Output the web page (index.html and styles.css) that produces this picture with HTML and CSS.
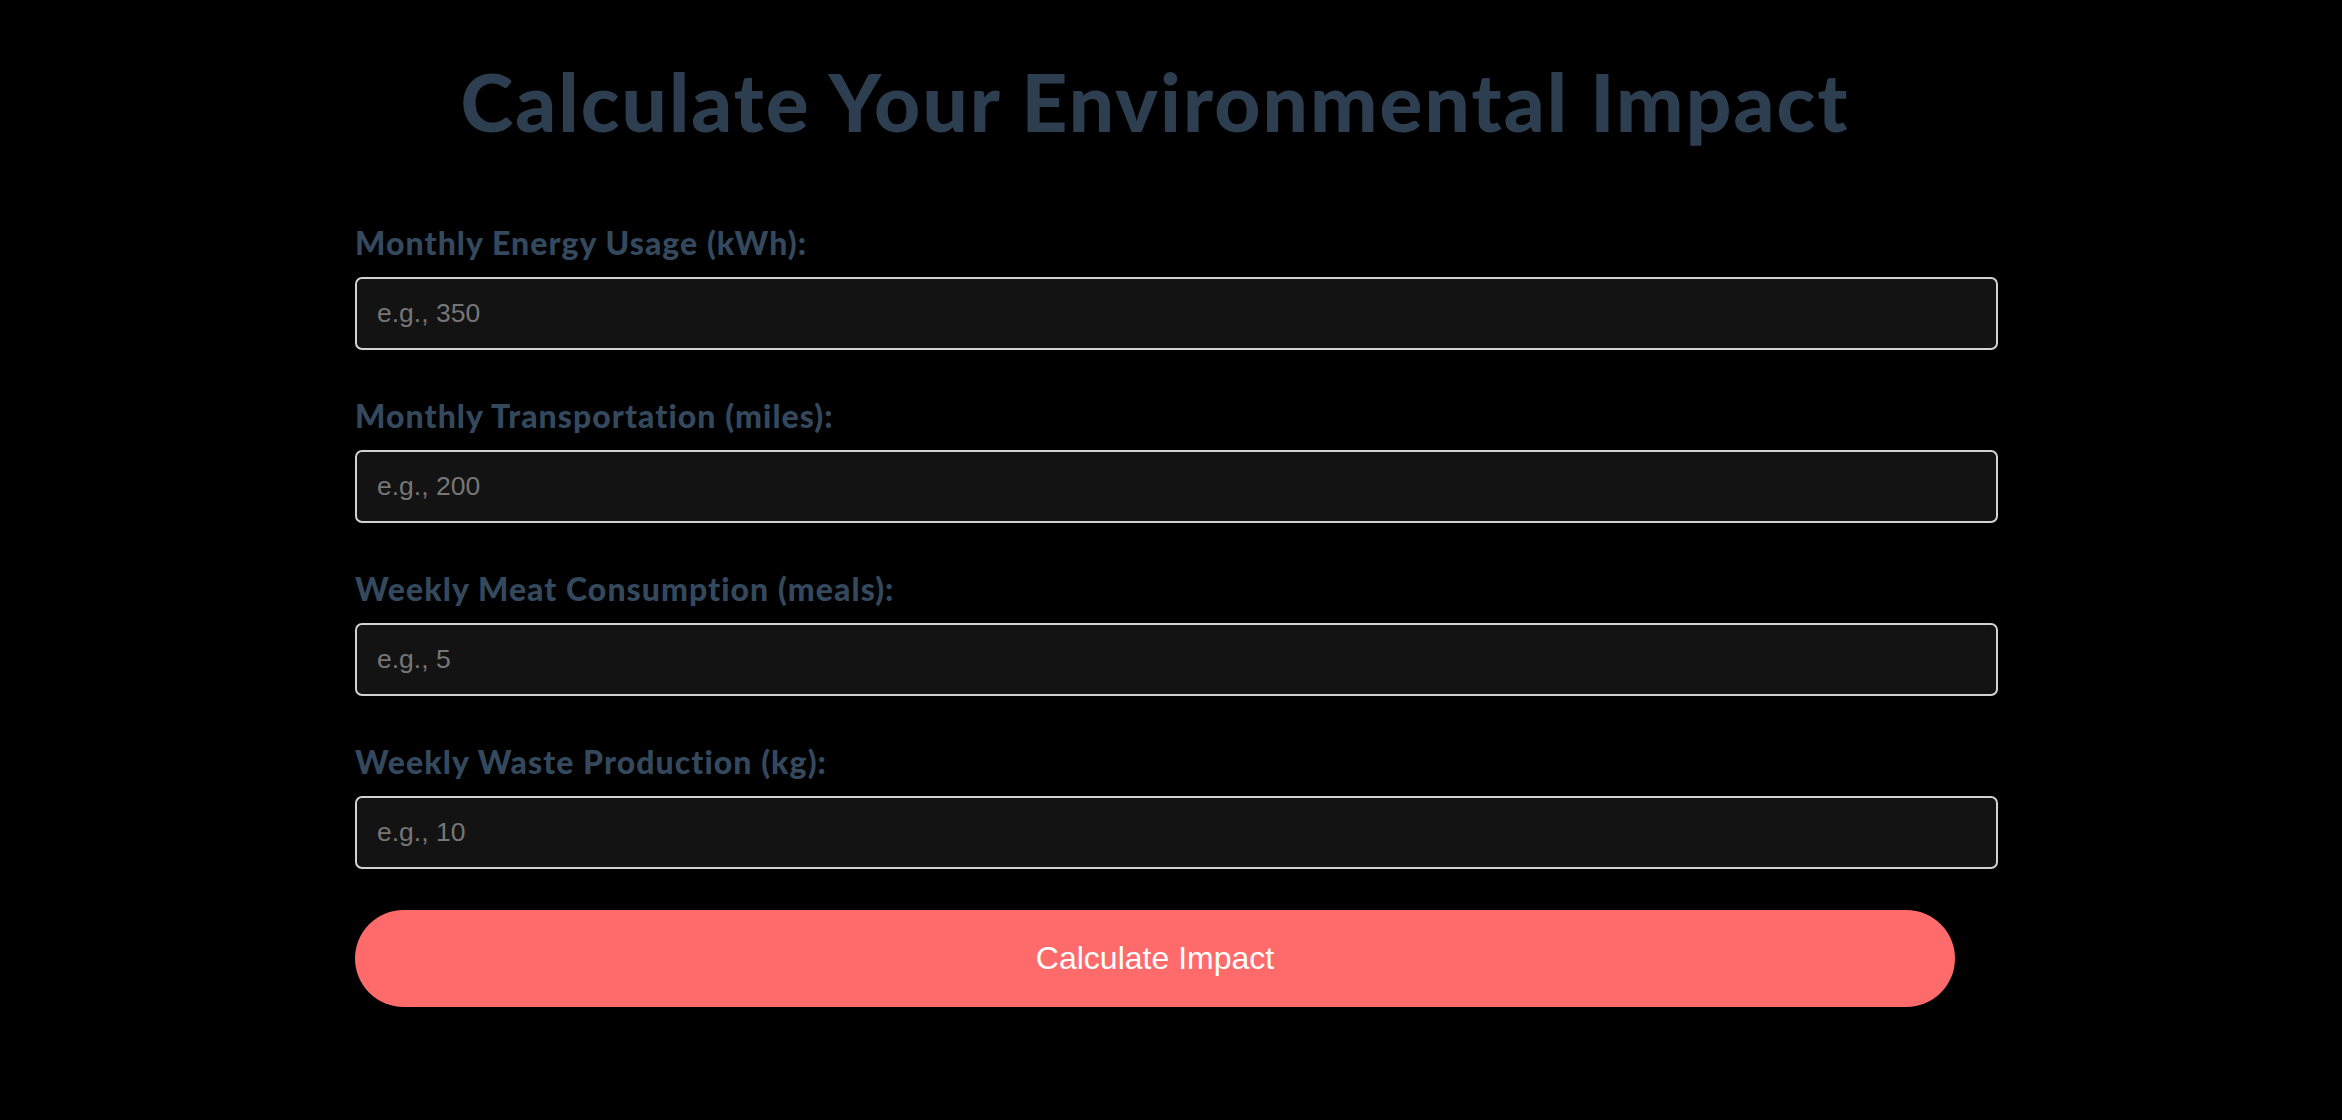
FILE: index.html
```html
<!DOCTYPE html>
<html lang="en">
<head>
<meta charset="utf-8">
<title>Calculate Your Environmental Impact</title>
<link rel="stylesheet" href="styles.css">
</head>
<body>
<main class="calculator">
  <h1 class="title">Calculate Your Environmental Impact</h1>
  <form class="form">
    <div class="field">
      <label class="label" for="energy">Monthly Energy Usage (kWh):</label>
      <input class="input" id="energy" type="number" placeholder="e.g., 350">
    </div>
    <div class="field">
      <label class="label" for="transport">Monthly Transportation (miles):</label>
      <input class="input" id="transport" type="number" placeholder="e.g., 200">
    </div>
    <div class="field">
      <label class="label" for="meat">Weekly Meat Consumption (meals):</label>
      <input class="input" id="meat" type="number" placeholder="e.g., 5">
    </div>
    <div class="field">
      <label class="label" for="waste">Weekly Waste Production (kg):</label>
      <input class="input" id="waste" type="number" placeholder="e.g., 10">
    </div>
    <button class="button" type="button">Calculate Impact</button>
  </form>
</main>
</body>
</html>
```
FILE: styles.css
```css
html, body {
  margin: 0;
  padding: 0;
  background: #000;
}

body {
  font-family: Lato, "Open Sans", sans-serif;
}

.calculator {
  width: 1600px;
  margin: 0 0 0 355px;
  padding-top: 51px;
}

.title {
  margin: 0 0 72px;
  font-size: 80px;
  line-height: 100px;
  font-weight: 900;
  letter-spacing: 2.1px;
  color: #2c3e50;
  text-align: center;
}

.form {
  display: flex;
  flex-direction: column;
}

.field {
  display: flex;
  flex-direction: column;
  margin-bottom: 46px;
}

.field:last-of-type {
  margin-bottom: 41px;
}

.label {
  display: block;
  font-size: 32px;
  line-height: 40px;
  font-weight: 900;
  letter-spacing: 1.05px;
  color: #34495e;
  margin-bottom: 14px;
}

.input {
  box-sizing: border-box;
  width: 1643px;
  height: 73px;
  margin: 0;
  padding: 0 20px;
  border: 2px solid #d2d2d2;
  border-radius: 7px;
  background: #131313;
  color: #ddd;
  font-family: "Liberation Sans", Arial, sans-serif;
  font-size: 26.5px;
  outline: none;
}

.input::placeholder {
  color: #767676;
}

.input::-webkit-outer-spin-button,
.input::-webkit-inner-spin-button {
  -webkit-appearance: none;
  margin: 0;
}

.button {
  width: 1600px;
  height: 97px;
  border: none;
  border-radius: 49px;
  background: #ff6b6b;
  color: #fff;
  font-family: "Liberation Sans", Arial, sans-serif;
  font-size: 32px;
  cursor: pointer;
}
```
